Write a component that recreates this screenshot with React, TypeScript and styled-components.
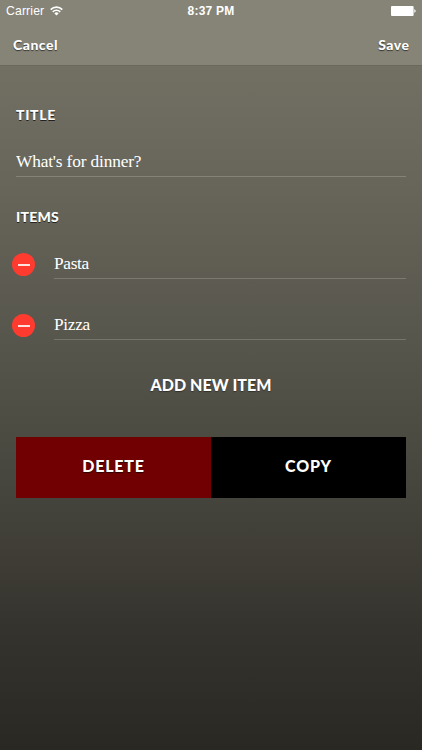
import React from "react";
import styled, { createGlobalStyle } from "styled-components";

const Global = createGlobalStyle`
  *, *::before, *::after { box-sizing: border-box; }
  body { margin: 0; background: #2a2925; }
  button, input { font: inherit; border: 0; padding: 0; margin: 0; background: none; color: inherit; border-radius: 0; outline: 0; }
`;

const Screen = styled.main`
  width: 422px;
  height: 750px;
  overflow: hidden;
  display: flex;
  flex-direction: column;
  color: #fff;
  font-family: Lato, sans-serif;
  background: linear-gradient(180deg, #78766a 0, #727063 66px, #67655a 190px, #57564c 340px, #45443c 500px, #35332d 630px, #292823 750px);
`;

const Header = styled.header`
  height: 66px;
  flex: none;
  background: #868477;
  border-bottom: 1px solid #6b695e;
`;

const StatusBar = styled.div`
  height: 22px;
  padding: 0 6px;
  display: grid;
  grid-template-columns: 1fr auto 1fr;
  align-items: center;
  font: 12.2px/22px "Liberation Sans", Arial, sans-serif;
`;

const Carrier = styled.div`
  display: flex;
  align-items: center;
  gap: 6px;
  letter-spacing: 0.15px;
`;

const Clock = styled.time`
  font-weight: 700;
  font-size: 12px;
  letter-spacing: 0.2px;
`;

const BatteryIcon = styled.svg`
  justify-self: end;
`;

const NavBar = styled.nav`
  display: flex;
  justify-content: space-between;
  padding: 0 13px;
  height: 44px;
`;

const NavButton = styled.button<{ $spacing: number }>`
  && {
    font: 900 14px/45px Lato, sans-serif;
    letter-spacing: ${(p) => p.$spacing}px;
    margin-right: ${(p) => -p.$spacing}px;
  }
  text-shadow: 0 1px 1px rgba(0, 0, 0, 0.6);
`;

const Form = styled.form`
  padding: 39px 16px 0;
  display: flex;
  flex-direction: column;
`;

const SectionTitle = styled.h2<{ $spacing: number }>`
  margin: 0;
  height: 20px;
  font: 900 14px/20px Lato, sans-serif;
  letter-spacing: ${(p) => p.$spacing}px;
  text-shadow: 0 1px 0 #222;
`;

const Field = styled.input<{ $spacing: number }>`
  display: block;
  min-width: 0;
  flex: 1;
  && {
    height: 30px;
    padding-top: 1px;
    font: 17.3px/28px "Liberation Serif", serif;
    letter-spacing: ${(p) => p.$spacing}px;
    border-bottom: 1px solid rgba(255, 255, 255, 0.19);
  }
`;

const TitleRow = styled.div`
  display: flex;
  margin: 22px 0 30px;
`;

const ItemList = styled.ul`
  list-style: none;
  margin: 22px 0 0 -4px;
  padding: 0;
  display: flex;
  flex-direction: column;
  gap: 31px;
`;

const ItemRow = styled.li`
  display: flex;
  align-items: flex-start;
  gap: 19px;
`;

const RemoveButton = styled.button`
  && {
    margin-top: 4px;
    width: 23px;
    height: 23px;
    border-radius: 50%;
    background: #ff3b30;
    display: grid;
    place-items: center;
  }
`;

const Minus = styled.span`
  width: 12px;
  height: 2px;
  background: rgba(255, 255, 255, 0.85);
`;

const AddButton = styled.button`
  && {
    margin-top: 30px;
    height: 30px;
    font: 900 16px/30px Lato, sans-serif;
    letter-spacing: 0.05px;
    text-shadow: 0 1px 1px rgba(0, 0, 0, 0.4);
  }
`;

const Actions = styled.div`
  margin-top: 37px;
  display: grid;
  grid-template-columns: 1fr 1fr;
`;

const ActionButton = styled.button<{ $bg: string; $spacing: number }>`
  && {
    height: 61px;
    padding-bottom: 3px;
    background: ${(p) => p.$bg};
    font: 900 16px/58px Lato, sans-serif;
    letter-spacing: ${(p) => p.$spacing}px;
    text-shadow: 0 1px 1px rgba(0, 0, 0, 0.6);
  }
`;

export default function App() {
  return (
    <Screen>
      <Global />
      <Header>
        <StatusBar>
          <Carrier>
            Carrier
            <svg width="13" height="10" viewBox="0 0 13 10" fill="none" stroke="#fff" strokeWidth="1.7">
              <path d="M0.7 3.6a8.2 8.2 0 0 1 11.6 0" />
              <path d="M2.8 5.8a5.2 5.2 0 0 1 7.4 0" />
              <path d="M6.5 9.6 4.4 7.4a3 3 0 0 1 4.2 0z" fill="#fff" stroke="none" />
            </svg>
          </Carrier>
          <Clock>8:37 PM</Clock>
          <BatteryIcon width="25" height="10" viewBox="0 0 25 10" fill="#fff">
            <rect x="0" y="0" width="22.6" height="10" rx="1" />
            <path d="M23.3 3.3c1.8.4 1.8 3 0 3.4z" />
          </BatteryIcon>
        </StatusBar>
        <NavBar>
          <NavButton $spacing={0.5}>Cancel</NavButton>
          <NavButton $spacing={0.5}>Save</NavButton>
        </NavBar>
      </Header>
      <Form onSubmit={(e) => e.preventDefault()}>
        <SectionTitle $spacing={0.7}>TITLE</SectionTitle>
        <TitleRow>
          <Field $spacing={-0.14} defaultValue="What's for dinner?" aria-label="Title" />
        </TitleRow>
        <SectionTitle $spacing={0.25}>ITEMS</SectionTitle>
        <ItemList>
          {["Pasta", "Pizza"].map((item) => (
            <ItemRow key={item}>
              <RemoveButton type="button" aria-label={`Remove ${item}`}>
                <Minus />
              </RemoveButton>
              <Field $spacing={-0.3} defaultValue={item} aria-label={item} />
            </ItemRow>
          ))}
        </ItemList>
        <AddButton type="button">ADD NEW ITEM</AddButton>
        <Actions>
          <ActionButton type="button" $bg="#700001" $spacing={0.8}>DELETE</ActionButton>
          <ActionButton type="button" $bg="#000" $spacing={0.9}>COPY</ActionButton>
        </Actions>
      </Form>
    </Screen>
  );
}
